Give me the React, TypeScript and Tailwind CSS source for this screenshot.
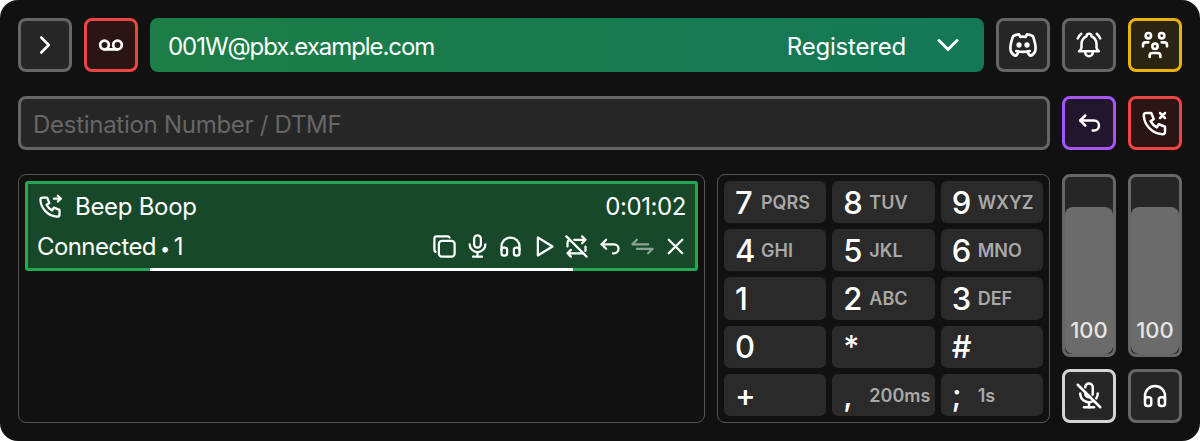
import type { ReactNode } from 'react'
import { Voicemail } from 'lucide-react'
import {
  TbArrowBackUp,
  TbArrowsExchange2,
  TbBellRinging,
  TbBrandDiscord,
  TbChevronDown,
  TbChevronRight,
  TbCopy,
  TbHeadphones,
  TbMicrophone,
  TbMicrophoneOff,
  TbPhoneOutgoing,
  TbPhoneX,
  TbPlayerPlay,
  TbRepeatOff,
  TbUsersGroup,
  TbX,
} from 'react-icons/tb'

const IconButton = ({ className, children }: { className: string; children: ReactNode }) => (
  <button className={`flex h-[54px] w-[54px] shrink-0 items-center justify-center rounded-lg border-[3px] text-white ${className}`}>
    {children}
  </button>
)

const keys = [
  ['7', 'PQRS'],
  ['8', 'TUV'],
  ['9', 'WXYZ'],
  ['4', 'GHI'],
  ['5', 'JKL'],
  ['6', 'MNO'],
  ['1', ''],
  ['2', 'ABC'],
  ['3', 'DEF'],
  ['0', ''],
  ['*', ''],
  ['#', ''],
  ['+', ''],
  [',', '200ms'],
  [';', '1s'],
]

const Slider = () => (
  <div className="flex h-[183px] w-[54px] flex-col rounded-lg border-[3px] border-[#666666] bg-[#262626]">
    <div className="h-[30px]" />
    <div className="flex flex-1 items-end justify-center rounded-lg bg-[#6b6b6b] pb-[7px] text-[22px] font-medium text-[#e5e5e5]">
      100
    </div>
  </div>
)

const App = () => {
  return (
    <div className="h-[441px] w-[1200px] bg-white font-['Inter',sans-serif]">
      <div className="flex h-full flex-col gap-6 rounded-[18px] bg-[#111111] p-[18px]">
        {/* top */}
        <div className="flex flex-col gap-6">
          <div className="flex gap-3">
            <IconButton className="border-[#666666] bg-[#262626]">
              <TbChevronRight size={30} />
            </IconButton>
            <IconButton className="border-[#ef4444] bg-[#2b1414]">
              <Voicemail size={26} strokeWidth={2.5} />
            </IconButton>
            <div className="flex flex-1 items-center justify-between rounded-lg bg-gradient-to-r from-[#1c7d45] to-[#147858] pl-[18px] pr-[18px] text-white">
              <span className="pt-[3px] text-[24px] tracking-[-1.05px]">001W@pbx.example.com</span>
              <span className="flex items-center gap-[24px] text-[24px] tracking-[-0.2px]">
                <span className="pt-[3px]">Registered</span>
                <TbChevronDown size={36} />
              </span>
            </div>
            <IconButton className="border-[#666666] bg-[#262626]">
              <TbBrandDiscord size={32} />
            </IconButton>
            <IconButton className="border-[#666666] bg-[#262626]">
              <TbBellRinging size={30} />
            </IconButton>
            <IconButton className="border-[#eab308] bg-[#2b2412]">
              <TbUsersGroup size={32} />
            </IconButton>
          </div>
          <div className="flex gap-3">
            <input
              placeholder="Destination Number / DTMF"
              className="h-[54px] flex-1 rounded-lg border-[3px] border-[#666666] bg-[#262626] px-3 pt-[2px] text-[24px] tracking-[-0.28px] outline-none placeholder:text-[#666666]"
            />
            <IconButton className="border-[#a855f7] bg-[#21162e]">
              <TbArrowBackUp size={30} />
            </IconButton>
            <IconButton className="border-[#ef4444] bg-[#2b1414]">
              <TbPhoneX size={30} />
            </IconButton>
          </div>
        </div>

        {/* bottom */}
        <div className="flex min-h-0 flex-1 gap-3">
          <div className="flex-1 rounded-lg border border-[#555555] p-[6px]">
            <div className="relative h-[90px] rounded-[3px] border-[3px] border-[#25a855] bg-[#17482a] text-white">
              <div className="flex h-[43px] items-center justify-between px-[9px] pt-[2px]">
                <div className="flex items-center gap-[11px] text-[24px] tracking-[-0.3px]">
                  <TbPhoneOutgoing size={27} />
                  Beep Boop
                </div>
                <span className="text-[24px] tracking-[-0.4px]">0:01:02</span>
              </div>
              <div className="flex items-center justify-between pl-[9px] pr-[6px]">
                <span className="pt-[2px] text-[24px] tracking-[-0.6px] [word-spacing:-2px]">
                  Connected <span className="text-[18px]">•</span> 1
                </span>
                <div className="flex items-center gap-[6px]">
                  <TbCopy size={27} />
                  <TbMicrophone size={27} />
                  <TbHeadphones size={27} />
                  <TbPlayerPlay size={27} />
                  <TbRepeatOff size={27} />
                  <TbArrowBackUp size={27} />
                  <TbArrowsExchange2 size={27} className="opacity-50" />
                  <TbX size={27} />
                </div>
              </div>
              {/* progress */}
              <div className="absolute -bottom-[3px] left-[122px] h-[3px] w-[423px] bg-white" />
            </div>
          </div>

          <div className="grid w-[333px] grid-cols-3 grid-rows-5 gap-[6px] rounded-lg border border-[#555555] p-[6px]">
            {keys.map(([digit, label]) => (
              <button key={digit} className="flex min-h-0 items-center gap-[8px] rounded-md bg-[#2a2a2a] pl-[11px] leading-none text-white">
                <span className="w-[18px] text-left text-[31px] font-medium">{digit}</span>
                {label && <span className="pt-[2px] text-[18px] font-semibold text-[#a8a8a8]">{label}</span>}
              </button>
            ))}
          </div>

          <div className="flex w-[120px] flex-col gap-3">
            <div className="flex gap-3">
              <Slider />
              <Slider />
            </div>
            <div className="flex gap-3">
              <IconButton className="border-[#d4d4d4] bg-[#262626]">
                <TbMicrophoneOff size={30} />
              </IconButton>
              <IconButton className="border-[#666666] bg-[#262626]">
                <TbHeadphones size={30} />
              </IconButton>
            </div>
          </div>
        </div>
      </div>
    </div>
  )
}

export default App
